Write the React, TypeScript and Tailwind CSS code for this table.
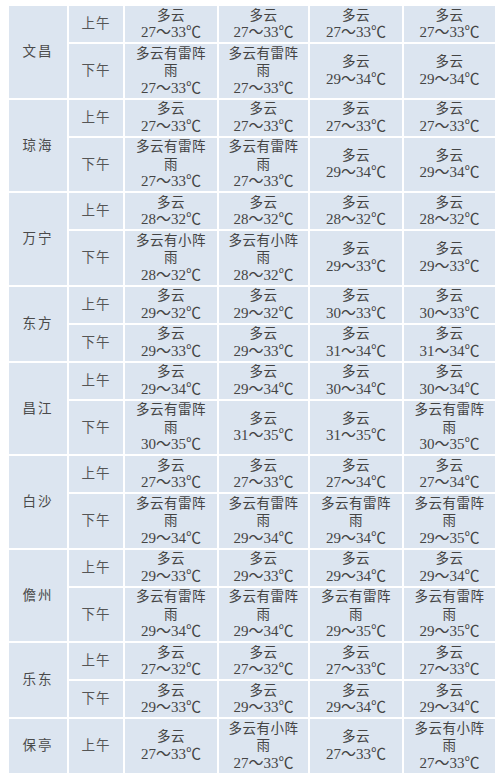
type Cell = string[]

const yun = (t: string): Cell => ['多云', t]
const lei = (t: string): Cell => ['多云有雷阵', '雨', t]
const xiao = (t: string): Cell => ['多云有小阵', '雨', t]

type Row = { period: string; cells: Cell[] }
type City = { name: string; rows: Row[] }

const data: City[] = [
  {
    name: '文昌',
    rows: [
      { period: '上午', cells: [yun('27～33℃'), yun('27～33℃'), yun('27～33℃'), yun('27～33℃')] },
      { period: '下午', cells: [lei('27～33℃'), lei('27～33℃'), yun('29～34℃'), yun('29～34℃')] },
    ],
  },
  {
    name: '琼海',
    rows: [
      { period: '上午', cells: [yun('27～33℃'), yun('27～33℃'), yun('27～33℃'), yun('27～33℃')] },
      { period: '下午', cells: [lei('27～33℃'), lei('27～33℃'), yun('29～34℃'), yun('29～34℃')] },
    ],
  },
  {
    name: '万宁',
    rows: [
      { period: '上午', cells: [yun('28～32℃'), yun('28～32℃'), yun('28～32℃'), yun('28～32℃')] },
      { period: '下午', cells: [xiao('28～32℃'), xiao('28～32℃'), yun('29～33℃'), yun('29～33℃')] },
    ],
  },
  {
    name: '东方',
    rows: [
      { period: '上午', cells: [yun('29～32℃'), yun('29～32℃'), yun('30～33℃'), yun('30～33℃')] },
      { period: '下午', cells: [yun('29～33℃'), yun('29～33℃'), yun('31～34℃'), yun('31～34℃')] },
    ],
  },
  {
    name: '昌江',
    rows: [
      { period: '上午', cells: [yun('29～34℃'), yun('29～34℃'), yun('30～34℃'), yun('30～34℃')] },
      { period: '下午', cells: [lei('30～35℃'), yun('31～35℃'), yun('31～35℃'), lei('30～35℃')] },
    ],
  },
  {
    name: '白沙',
    rows: [
      { period: '上午', cells: [yun('27～33℃'), yun('27～33℃'), yun('27～34℃'), yun('27～34℃')] },
      { period: '下午', cells: [lei('29～34℃'), lei('29～34℃'), lei('29～34℃'), lei('29～35℃')] },
    ],
  },
  {
    name: '儋州',
    rows: [
      { period: '上午', cells: [yun('29～33℃'), yun('29～33℃'), yun('29～34℃'), yun('29～34℃')] },
      { period: '下午', cells: [lei('29～34℃'), lei('29～34℃'), lei('29～35℃'), lei('29～35℃')] },
    ],
  },
  {
    name: '乐东',
    rows: [
      { period: '上午', cells: [yun('27～32℃'), yun('27～32℃'), yun('27～33℃'), yun('27～33℃')] },
      { period: '下午', cells: [yun('29～33℃'), yun('29～33℃'), yun('29～34℃'), yun('29～34℃')] },
    ],
  },
  {
    name: '保亭',
    rows: [
      { period: '上午', cells: [yun('27～33℃'), xiao('27～33℃'), yun('27～33℃'), xiao('27～33℃')] },
    ],
  },
]

const cellCls = 'border-2 border-white bg-[#dce5f0] text-center align-middle p-0'

export default function App() {
  return (
    <div
      className="min-h-[781px] w-[500px] bg-white pt-[4px] pl-[7px] text-[13.5px] leading-[17.5px] text-[#444]"
      style={{ fontFamily: '"Liberation Serif", "Noto Sans CJK SC", serif' }}
    >
      <table className="border-collapse table-fixed w-[488px]">
        <colgroup>
          <col className="w-[60px]" />
          <col className="w-[56px]" />
          <col className="w-[94px]" />
          <col className="w-[91px]" />
          <col className="w-[94px]" />
          <col className="w-[93px]" />
        </colgroup>
        <tbody>
          {data.map((city) =>
            city.rows.map((row, ri) => {
              const tall = row.cells.some((c) => c.length > 2)
              return (
                <tr key={city.name + row.period} className={tall ? 'h-[55.5px]' : 'h-[38px]'}>
                  {ri === 0 && (
                    <td rowSpan={city.rows.length} className={cellCls + ' text-[#4a4a4a] tracking-[2px]'}>
                      {city.name}
                    </td>
                  )}
                  <td className={cellCls + ' text-[#555] tracking-[1px]'}>{row.period}</td>
                  {row.cells.map((cell, ci) => (
                    <td key={ci} className={cellCls}>
                      {cell.map((line, li) =>
                        li === cell.length - 1 ? (
                          <div key={li} className="text-[15px]">
                            {line}
                          </div>
                        ) : (
                          <div key={li} className="tracking-[0.5px]">
                            {line}
                          </div>
                        ),
                      )}
                    </td>
                  ))}
                </tr>
              )
            }),
          )}
        </tbody>
      </table>
    </div>
  )
}
